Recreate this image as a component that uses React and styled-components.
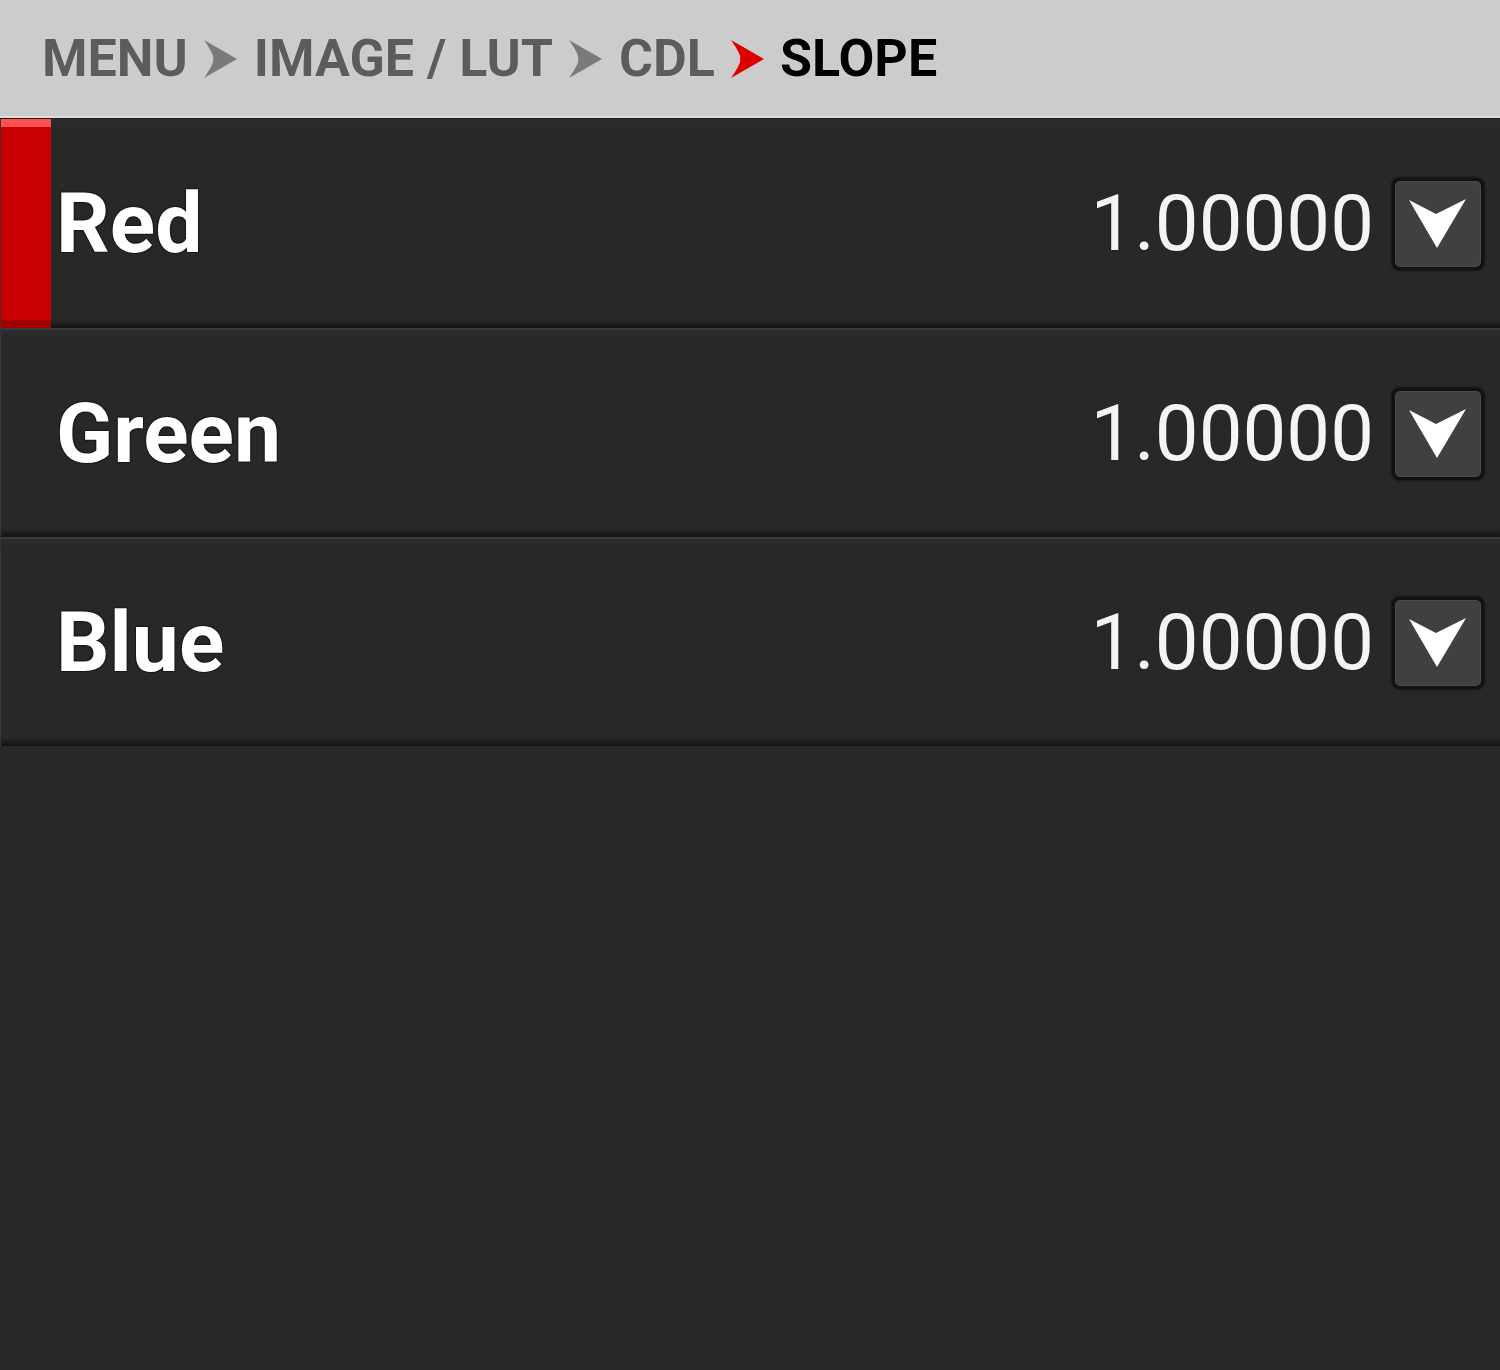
import React from "react";
import styled, { createGlobalStyle } from "styled-components";

const GlobalStyle = createGlobalStyle`
  html, body {
    margin: 0;
    padding: 0;
    background: #282828;
    font-family: Roboto, "Liberation Sans", sans-serif;
  }
`;

const Screen = styled.div`
  width: 1500px;
  min-height: 1370px;
  background: #282828;
`;

const Header = styled.div`
  height: 118px;
  background: #cccccc;
  border-bottom: 2px solid #dddddd;
  display: flex;
  align-items: center;
  padding: 2px 0 0 42px;
  box-sizing: border-box;
`;

const Crumb = styled.span`
  font-size: 52px;
  font-weight: 700;
  line-height: 1;
  color: ${({ current }) => (current ? "#000000" : "#5c5c5c")};
  text-shadow: 0 0 1px #f2f2f2;
  white-space: pre;
`;

const Separator = styled.svg`
  width: 33px;
  height: 38px;
  flex: none;
  margin: ${({ active }) => (active ? "0 16px" : "0 17px 0 16px")};
  fill: ${({ active }) => (active ? "#dd0000" : "#7a7a7a")};
`;

const List = styled.div`
  display: flex;
  flex-direction: column;
`;

const Row = styled.div`
  height: ${({ first }) => (first ? "210px" : "209px")};
  box-sizing: border-box;
  display: flex;
  align-items: center;
  border-top: ${({ first }) => (first ? "1px solid #1c1c1c" : "2px solid #3a3a3a")};
  border-left: 1px solid #363636;
  background: linear-gradient(
    to bottom,
    #2c2c2c 0,
    #282828 12px,
    #282828 calc(100% - 8px),
    #131313 100%
  );
  padding-right: 16px;
`;

const Marker = styled.div`
  align-self: stretch;
  width: 50px;
  flex: none;
  background: ${({ active }) =>
    active
      ? "linear-gradient(to bottom, #ff5050 0, #ff5050 8px, #c80000 8px, #c80000 calc(100% - 8px), #a00000 calc(100% - 8px))"
      : "transparent"};
`;

const Label = styled.span`
  flex: 1;
  padding-left: 5px;
  font-size: 84px;
  font-weight: 700;
  color: #ffffff;
  line-height: 1;
  text-shadow: 0 0 2px #000, 0 0 1px #000, 0 0 1px #000;
`;

const Value = styled.span`
  font-size: 78px;
  font-weight: 400;
  color: #f4f4f4;
  line-height: 1;
  margin-right: 18px;
  text-shadow: 0 0 1px #000;
`;

const DropButton = styled.button`
  width: 92px;
  height: 92px;
  flex: none;
  box-sizing: border-box;
  padding: 0;
  border: 3px solid #121212;
  border-radius: 8px;
  background: #404040;
  box-shadow: inset 0 0 0 1px #4a4a4a, 0 0 3px #000;
  display: flex;
  align-items: center;
  justify-content: center;
`;

const ArrowIcon = styled.svg`
  width: 86px;
  height: 86px;
  fill: #ffffff;
`;

function Chevron({ active }) {
  return (
    <Separator active={active} viewBox="0 0 33 38">
      <path d="M0 0 L33 19 L0 38 Q11 22 9 19 Q11 16 0 0 Z" />
    </Separator>
  );
}

const rows = [
  { name: "Red", value: "1.00000", active: true },
  { name: "Green", value: "1.00000" },
  { name: "Blue", value: "1.00000" },
];

export default function App() {
  return (
    <Screen>
      <GlobalStyle />
      <Header>
        <Crumb>MENU</Crumb>
        <Chevron />
        <Crumb>IMAGE / LUT</Crumb>
        <Chevron />
        <Crumb>CDL</Crumb>
        <Chevron active />
        <Crumb current>SLOPE</Crumb>
      </Header>
      <List>
        {rows.map((row, i) => (
          <Row key={row.name} first={i === 0}>
            <Marker active={row.active} />
            <Label>{row.name}</Label>
            <Value>{row.value}</Value>
            <DropButton>
              <ArrowIcon viewBox="0 0 86 86">
                <path d="M14 19 L41 33 L71 18 L42 67 Z" />
              </ArrowIcon>
            </DropButton>
          </Row>
        ))}
      </List>
    </Screen>
  );
}
